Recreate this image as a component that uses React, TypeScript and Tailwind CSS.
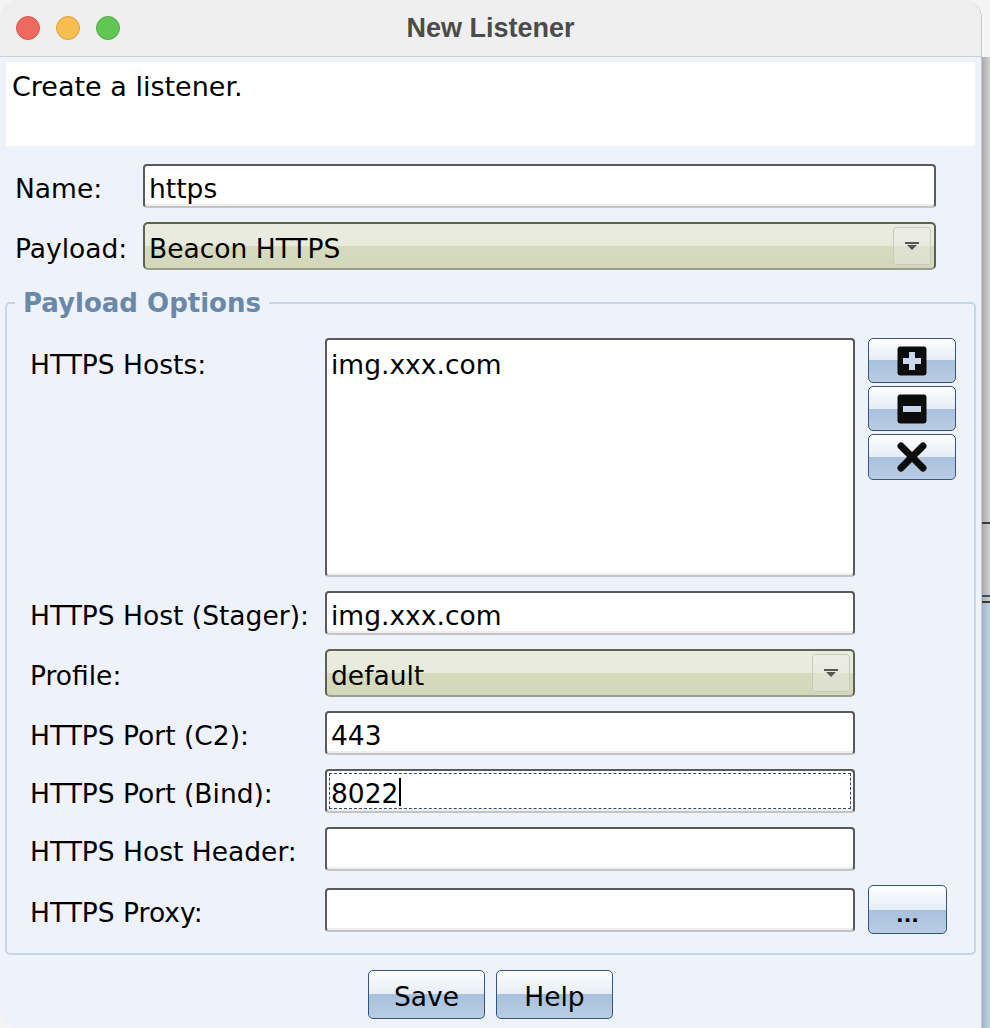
import React from 'react';

const font = "font-['DejaVu_Sans',sans-serif]";

const inputCls =
  'bg-white border-2 border-[#5a5a5a] border-b-[#c4c4c4] rounded-[4px] shadow-[inset_0_-2px_0_#eeeeee] flex items-center pl-[4px] text-[26.5px] leading-[30px] text-black';

const blueBtn =
  'border-[1.5px] border-[#36557a] rounded-[5px] bg-[linear-gradient(to_bottom,#fdfeff_0%,#e6edf5_50%,#a9c1dd_50%,#b9cde4_100%)] flex items-center justify-center';

const TextField = ({ value, h = 'h-[44px]', focused = false }: { value?: string; h?: string; focused?: boolean }) => (
  <div className={`${inputCls} ${h} pt-[5px] ${focused ? 'outline-dashed outline-1 outline-[#2f4d70] outline-offset-[-5px]' : ''}`}>
    <span>{value}</span>
    {focused && <span className="w-[2px] h-[28px] bg-black ml-[1px] -mt-[3px]" />}
  </div>
);

const Combo = ({ value }: { value: string }) => (
  <div className="h-[48px] flex border-2 border-[#5d6150] border-b-[#9a9d8c] rounded-[5px] bg-[linear-gradient(to_bottom,#eaecdf_0%,#e8eadc_50%,#d6dbbf_50%,#d3d8bb_100%)] overflow-hidden">
    <div className="flex-1 flex items-center pl-[4px] pt-[5px] text-[26.5px] leading-[30px] text-black">{value}</div>
    <div className="w-[38px] my-[3px] mr-[3px] border border-[#c9cbba] rounded-[3px] bg-[linear-gradient(to_bottom,#ecede3_0%,#e9eadf_50%,#dfe2d0_50%,#dde0cd_100%)] flex items-center justify-center">
      <svg width="14" height="9" viewBox="0 0 14 9">
        <rect x="0" y="0" width="14" height="2" fill="#555" />
        <path d="M2 3 H12 L7 8 Z" fill="#555" />
      </svg>
    </div>
  </div>
);

const PlusIcon = () => (
  <svg width="30" height="30" viewBox="0 0 30 30">
    <rect x="0.5" y="0.5" width="29" height="29" rx="3" fill="#0b0b0b" />
    <path d="M12 6 H18 V12 H24 V18 H18 V24 H12 V18 H6 V12 H12 Z" fill="#c9d7e8" />
  </svg>
);

const MinusIcon = () => (
  <svg width="30" height="30" viewBox="0 0 30 30">
    <rect x="0.5" y="0.5" width="29" height="29" rx="3" fill="#0b0b0b" />
    <rect x="6" y="12" width="18" height="6" fill="#c9d7e8" />
  </svg>
);

const XIcon = () => (
  <svg width="32" height="30" viewBox="0 0 32 30">
    <path d="M5 4 L27 26 M27 4 L5 26" stroke="#0b0b0b" strokeWidth="7" strokeLinecap="round" />
  </svg>
);

const Label = ({ children, top = false }: { children: React.ReactNode; top?: boolean }) => (
  <div className={`text-[26.5px] leading-[30px] text-black whitespace-nowrap ${top ? 'self-start pt-[12px]' : 'self-center pt-[6px]'}`}>{children}</div>
);

export default function App() {
  return (
    <div className={`w-[990px] h-[1028px] flex overflow-hidden bg-[#f4f4f4] ${font}`}>
      <div className="w-[982px] h-[1028px] shrink-0 flex flex-col bg-[#eef2fa] rounded-t-[18px] rounded-bl-[18px] overflow-hidden border-r border-[#c8c8c8]">
        <div className="h-[57px] shrink-0 grid grid-cols-[1fr_auto_1fr] items-center bg-[#efefef] border-b border-[#cfcfcf]">
          <div className="flex items-center gap-[16px] pl-[16px]">
            <span className="w-[24px] h-[24px] rounded-full bg-[#ee6a5f] border border-[#d5574c]" />
            <span className="w-[24px] h-[24px] rounded-full bg-[#f5be4f] border border-[#d9a23c]" />
            <span className="w-[24px] h-[24px] rounded-full bg-[#62c655] border border-[#4fac43]" />
          </div>
          <div className="font-['Liberation_Sans',sans-serif] font-bold text-[27px] text-[#4b4b4b]">New Listener</div>
          <div />
        </div>

        <div className="mt-[5px] mx-[6px] h-[84px] bg-white pl-[6px] pt-[10px] text-[27px] leading-[30px] text-black">
          Create a listener.
        </div>

        <div className="mt-[18px] pl-[15px] pr-[45px] grid grid-cols-[128px_1fr] gap-y-[14px]">
          <Label>Name:</Label>
          <TextField value="https" />
          <Label>Payload:</Label>
          <Combo value="Beacon HTTPS" />
        </div>

        <fieldset className="mt-[18px] mx-[5px] border-2 border-[#c6d4e5] rounded-[5px]">
          <legend className="ml-[8px] px-[8px] font-bold text-[26px] leading-[30px] text-[#6a88a8]">Payload Options</legend>
          <div className="grid grid-cols-[282px_530px_88px] gap-x-[13px] gap-y-[14px] pl-[23px] pt-[20px] pb-[19px]">
            <Label top>HTTPS Hosts:</Label>
            <div className={`${inputCls} h-[239px] !items-start pt-[10px]`}>img.xxx.com</div>
            <div className="flex flex-col gap-[3px]">
              <button className={`${blueBtn} h-[45px]`}><PlusIcon /></button>
              <button className={`${blueBtn} h-[45px]`}><MinusIcon /></button>
              <button className={`${blueBtn} h-[46px]`}><XIcon /></button>
            </div>

            <Label>HTTPS Host (Stager):</Label>
            <TextField value="img.xxx.com" />
            <div />

            <Label>Profile:</Label>
            <Combo value="default" />
            <div />

            <Label>HTTPS Port (C2):</Label>
            <TextField value="443" />
            <div />

            <Label>HTTPS Port (Bind):</Label>
            <TextField value="8022" focused />
            <div />

            <Label>HTTPS Host Header:</Label>
            <TextField />
            <div />

            <Label>HTTPS Proxy:</Label>
            <div className="self-center"><TextField /></div>
            <button className={`${blueBtn} w-[79px] h-[49px] items-end pb-[8px] text-[20px] font-bold leading-none text-black`}>...</button>
          </div>
        </fieldset>

        <div className="mt-[15px] flex justify-center gap-[11px]">
          <button className={`${blueBtn} w-[117px] h-[49px] pt-[4px] text-[26.5px] leading-[30px] text-black`}>Save</button>
          <button className={`${blueBtn} w-[117px] h-[49px] pt-[4px] text-[26.5px] leading-[30px] text-black`}>Help</button>
        </div>
      </div>

      <div className="flex-1 flex flex-col bg-[linear-gradient(to_right,#a9a9a9,#d2d2d2)]">
        <div className="h-[57px] bg-[#f4f4f4]" />
        <div className="h-[465px]" />
        <div className="h-[2px] bg-[#3a3a3a]" />
        <div className="h-[71px]" />
        <div className="h-[2px] bg-[#34506f]" />
        <div className="h-[4px]" />
        <div className="h-[2px] bg-[#3a3a3a]" />
        <div className="flex-1 bg-[linear-gradient(to_right,#9fb3cc,#c4d2e2)]" />
      </div>
    </div>
  );
}
